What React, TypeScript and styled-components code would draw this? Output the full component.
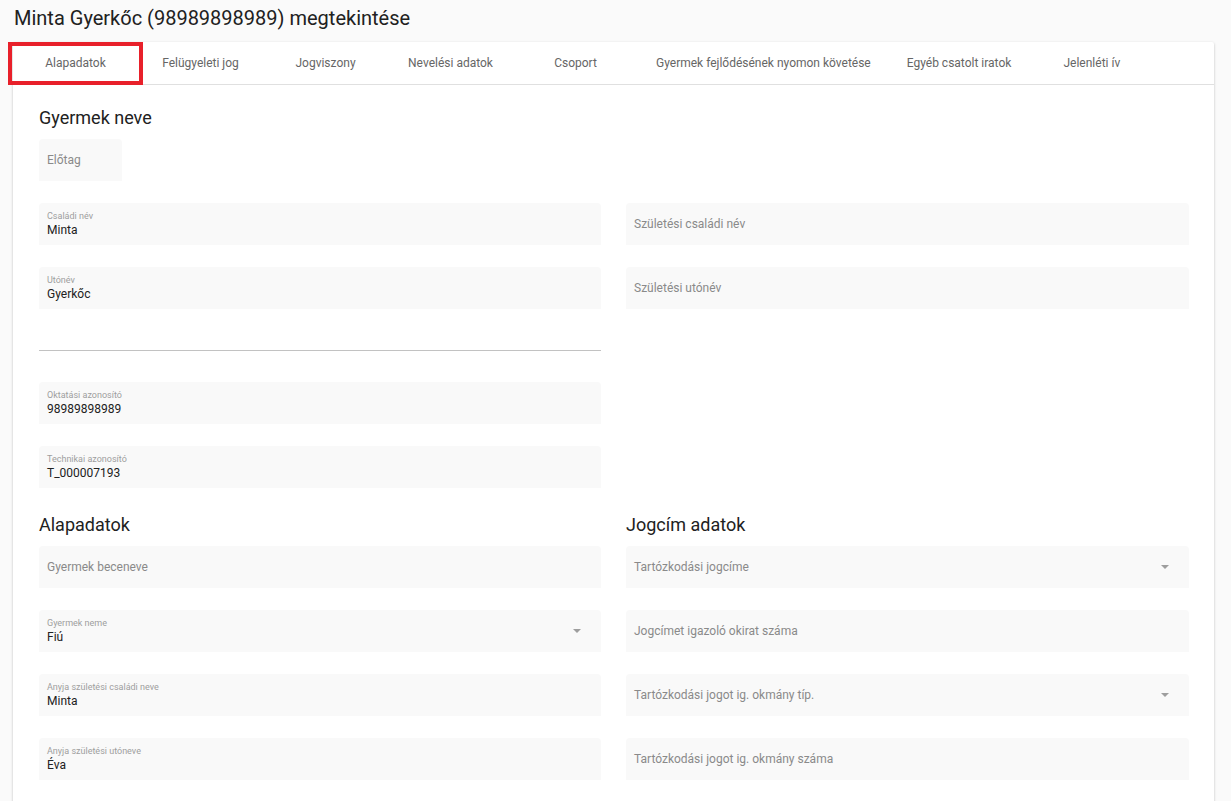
import React from 'react';
import styled, { createGlobalStyle } from 'styled-components';

const GlobalStyle = createGlobalStyle`
  html, body {
    margin: 0;
    padding: 0;
    background: #fafafa;
    font-family: Roboto, "Liberation Sans", Arial, sans-serif;
    color: #212121;
  }
`;

const Page = styled.div`
  width: 1231px;
  height: 801px;
  overflow: hidden;
`;

const Title = styled.h1`
  margin: 0;
  padding: 6px 0 0 14px;
  height: 36px;
  font-size: 20px;
  line-height: 24px;
  font-weight: 400;
  color: #212121;
`;

const Card = styled.div`
  margin-left: 13px;
  width: 1201px;
  background: #fff;
  box-shadow: 0 1px 3px rgba(0, 0, 0, 0.2), 0 1px 1px rgba(0, 0, 0, 0.12);
  border-radius: 2px;
  min-height: 760px;
`;

const TabBar = styled.div`
  display: flex;
  height: 42px;
  border-bottom: 1px solid #e0e0e0;
`;

const Tab = styled.div<{ $marked?: boolean }>`
  position: relative;
  min-width: 125px;
  padding: 0 18px;
  box-sizing: border-box;
  display: flex;
  align-items: center;
  justify-content: center;
  font-size: 12px;
  color: #666;
  white-space: nowrap;

  &::after {
    content: '';
    display: ${(p) => (p.$marked ? 'block' : 'none')};
    position: absolute;
    top: 0;
    bottom: -1px;
    left: -5px;
    right: -5px;
    border: 4px solid #e8202a;
  }
`;

const Content = styled.div`
  padding: 20px 25px 20px 26px;
`;

const SectionTitle = styled.h2<{ $offset?: number }>`
  margin: ${(p) => p.$offset ?? 0}px 0 8px;
  font-size: 18px;
  line-height: 26px;
  font-weight: 400;
  color: #212121;
`;

const Columns = styled.div`
  display: grid;
  grid-template-columns: 562px 563px;
  column-gap: 25px;
  align-items: start;
`;

const Column = styled.div`
  display: flex;
  flex-direction: column;
`;

const Field = styled.div<{ $width?: number; $filled?: boolean }>`
  position: relative;
  height: 42px;
  width: ${(p) => (p.$width ? `${p.$width}px` : 'auto')};
  margin-bottom: 22px;
  background: #f9f9f9;
  border-radius: 4px 4px 0 0;
  padding: ${(p) => (p.$filled ? '8px 9px 0 8px' : '0 9px 0 8px')};
  box-sizing: border-box;
  display: flex;
  flex-direction: column;
  justify-content: ${(p) => (p.$filled ? 'flex-start' : 'center')};
`;

const Label = styled.div`
  font-size: 9px;
  line-height: 11px;
  color: #9e9e9e;
`;

const Value = styled.div`
  font-size: 12px;
  line-height: 17px;
  color: #212121;
`;

const Placeholder = styled.div`
  font-size: 12px;
  line-height: 16px;
  color: #8a8a8a;
`;

const Arrow = styled.span`
  position: absolute;
  right: 20px;
  top: 50%;
  margin-top: -2px;
  width: 0;
  height: 0;
  border-left: 4.5px solid transparent;
  border-right: 4.5px solid transparent;
  border-top: 4.5px solid #9e9e9e;
`;

const UnderlineInput = styled.div`
  height: 19px;
  border-bottom: 1px solid #c2c2c2;
  margin-bottom: 31px;
`;

type FieldProps = { label: string; value?: string; select?: boolean; width?: number };

const FormField: React.FC<FieldProps> = ({ label, value, select, width }) => (
  <Field $width={width} $filled={!!value}>
    {value ? (
      <>
        <Label>{label}</Label>
        <Value>{value}</Value>
      </>
    ) : (
      <Placeholder>{label}</Placeholder>
    )}
    {select && <Arrow />}
  </Field>
);

const tabs = [
  'Alapadatok',
  'Felügyeleti jog',
  'Jogviszony',
  'Nevelési adatok',
  'Csoport',
  'Gyermek fejlődésének nyomon követése',
  'Egyéb csatolt iratok',
  'Jelenléti ív',
];

export default function App() {
  return (
    <Page>
      <GlobalStyle />
      <Title>Minta Gyerkőc (98989898989) megtekintése</Title>
      <Card>
        <TabBar>
          {tabs.map((t, i) => (
            <Tab key={t} $marked={i === 0}>
              {t}
            </Tab>
          ))}
        </TabBar>
        <Content>
          <SectionTitle>Gyermek neve</SectionTitle>
          <FormField label="Előtag" width={83} />
          <Columns>
            <Column>
              <FormField label="Családi név" value="Minta" />
              <FormField label="Utónév" value="Gyerkőc" />
              <UnderlineInput />
              <FormField label="Oktatási azonosító" value="98989898989" />
              <FormField label="Technikai azonosító" value="T_000007193" />
            </Column>
            <Column>
              <FormField label="Születési családi név" />
              <FormField label="Születési utónév" />
            </Column>
          </Columns>
          <Columns>
            <Column>
              <SectionTitle $offset={2}>Alapadatok</SectionTitle>
              <FormField label="Gyermek beceneve" />
              <FormField label="Gyermek neme" value="Fiú" select />
              <FormField label="Anyja születési családi neve" value="Minta" />
              <FormField label="Anyja születési utóneve" value="Éva" />
            </Column>
            <Column>
              <SectionTitle $offset={2}>Jogcím adatok</SectionTitle>
              <FormField label="Tartózkodási jogcíme" select />
              <FormField label="Jogcímet igazoló okirat száma" />
              <FormField label="Tartózkodási jogot ig. okmány típ." select />
              <FormField label="Tartózkodási jogot ig. okmány száma" />
            </Column>
          </Columns>
        </Content>
      </Card>
    </Page>
  );
}
